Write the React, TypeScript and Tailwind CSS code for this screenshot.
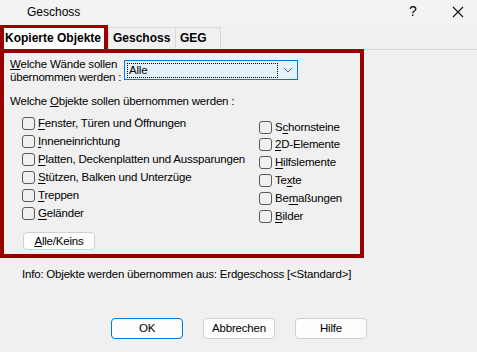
import React from 'react';

type Item = { pre?: string; acc: string; post: string };

const leftItems: Item[] = [
  { acc: 'F', post: 'enster, Türen und Öffnungen' },
  { acc: 'I', post: 'nneneinrichtung' },
  { acc: 'P', post: 'latten, Deckenplatten und Aussparungen' },
  { acc: 'S', post: 'tützen, Balken und Unterzüge' },
  { acc: 'T', post: 'reppen' },
  { acc: 'G', post: 'eländer' },
];

const rightItems: Item[] = [
  { pre: 'S', acc: 'c', post: 'hornsteine' },
  { acc: '2', post: 'D-Elemente' },
  { acc: 'H', post: 'ilfslemente' },
  { pre: 'Te', acc: 'x', post: 'te' },
  { pre: 'Be', acc: 'm', post: 'aßungen' },
  { acc: 'B', post: 'ilder' },
];

function Label({ item }: { item: Item }) {
  return (
    <span className="whitespace-nowrap">
      {item.pre}
      <u className="underline-offset-[2px]">{item.acc}</u>
      {item.post}
    </span>
  );
}

function Box() {
  return <span className="w-[13px] h-[13px] rounded-[3px] border border-[#5a5a5a] mr-[3px] shrink-0" />;
}

export default function App() {
  return (
    <div className="w-[477px] h-[352px] bg-[#f0f0f0] text-[11.5px] tracking-[-0.2px] leading-[13px] text-black font-['Liberation_Sans',Arial,sans-serif] whitespace-nowrap overflow-hidden">
      {/* title bar */}
      <div className="h-[25px] bg-[#f3f3f3] flex items-center pl-[27px] relative text-[12px] tracking-normal">
        <span>Geschoss</span>
        <span className="absolute left-[409px] top-[5px] text-[14px]">?</span>
        <svg className="absolute left-[452px] top-[6px]" width="12" height="12" viewBox="0 0 12 12">
          <path d="M1 1 L11 11 M11 1 L1 11" stroke="#111" strokeWidth="1.1" />
        </svg>
      </div>

      {/* tabs */}
      <div className="h-[25px] flex items-end border-b border-[#d9d9d9] text-[12px] tracking-normal">
        <div className="w-[108px] h-[25px] border-4 border-b-0 border-[#990000] bg-white font-bold flex items-center pl-[1px]">
          Kopierte Objekte
        </div>
        <div className="w-[68px] h-[22px] border border-b-0 border-[#d9d9d9] font-bold flex items-center pl-[4px]">
          Geschoss
        </div>
        <div className="w-[45px] h-[22px] border border-l-0 border-b-0 border-[#d9d9d9] font-bold flex items-center pl-[4px]">
          GEG
        </div>
      </div>

      {/* panel */}
      <div className="-mt-[1px] w-[364px] h-[209px] border-4 border-[#990000] pl-[6px] pt-[5px]">
        <div className="flex">
          <div className="w-[114px]">
            <div>
              <u>W</u>elche Wände sollen
            </div>
            <div>übernommen werden :</div>
          </div>
          <div className="mt-[2px] w-[174px] h-[20px] border border-[#0078d7] bg-[#e5f1fb] flex items-center pl-[2px] pr-[4px]">
            <div className="w-[151px] h-[15px] border border-dotted border-black flex items-center pl-[1px]">
              Alle
            </div>
            <svg className="ml-auto" width="10" height="6" viewBox="0 0 10 6">
              <path d="M1 1 L5 5 L9 1" stroke="#606060" strokeWidth="1" fill="none" />
            </svg>
          </div>
        </div>

        <div className="mt-[11px]">
          Welche <u>O</u>bjekte sollen übernommen werden :
        </div>

        <div className="flex mt-[6px]">
          <div className="w-[249px] pl-[12px]">
            {leftItems.map((it) => (
              <div key={it.post} className="flex items-center h-[18px]">
                <Box />
                <Label item={it} />
              </div>
            ))}
          </div>
          <div className="pt-[5px]">
            {rightItems.map((it, i) => (
              <div key={it.post} className={`flex items-center ${i === 0 ? 'h-[16px]' : 'h-[18px]'}`}>
                <Box />
                <Label item={it} />
              </div>
            ))}
          </div>
        </div>

        <button className="mt-[7px] ml-[13px] w-[72px] h-[18px] bg-[#fdfdfd] border border-[#d0d0d0] rounded-[4px] flex items-center justify-center">
          <span>
            <u>A</u>lle/Keins
          </span>
        </button>
      </div>

      <div className="pl-[22px] mt-[10px]">Info: Objekte werden übernommen aus: Erdgeschoss [&lt;Standard&gt;]</div>

      <div className="flex pl-[111px] gap-[20px] mt-[37px]">
        <button className="w-[72px] h-[21px] bg-[#fdfdfd] border border-[#0078d7] rounded-[4px]">OK</button>
        <button className="w-[72px] h-[21px] bg-[#fdfdfd] border border-[#d0d0d0] rounded-[4px]">Abbrechen</button>
        <button className="w-[72px] h-[21px] bg-[#fdfdfd] border border-[#d0d0d0] rounded-[4px]">Hilfe</button>
      </div>
    </div>
  );
}
